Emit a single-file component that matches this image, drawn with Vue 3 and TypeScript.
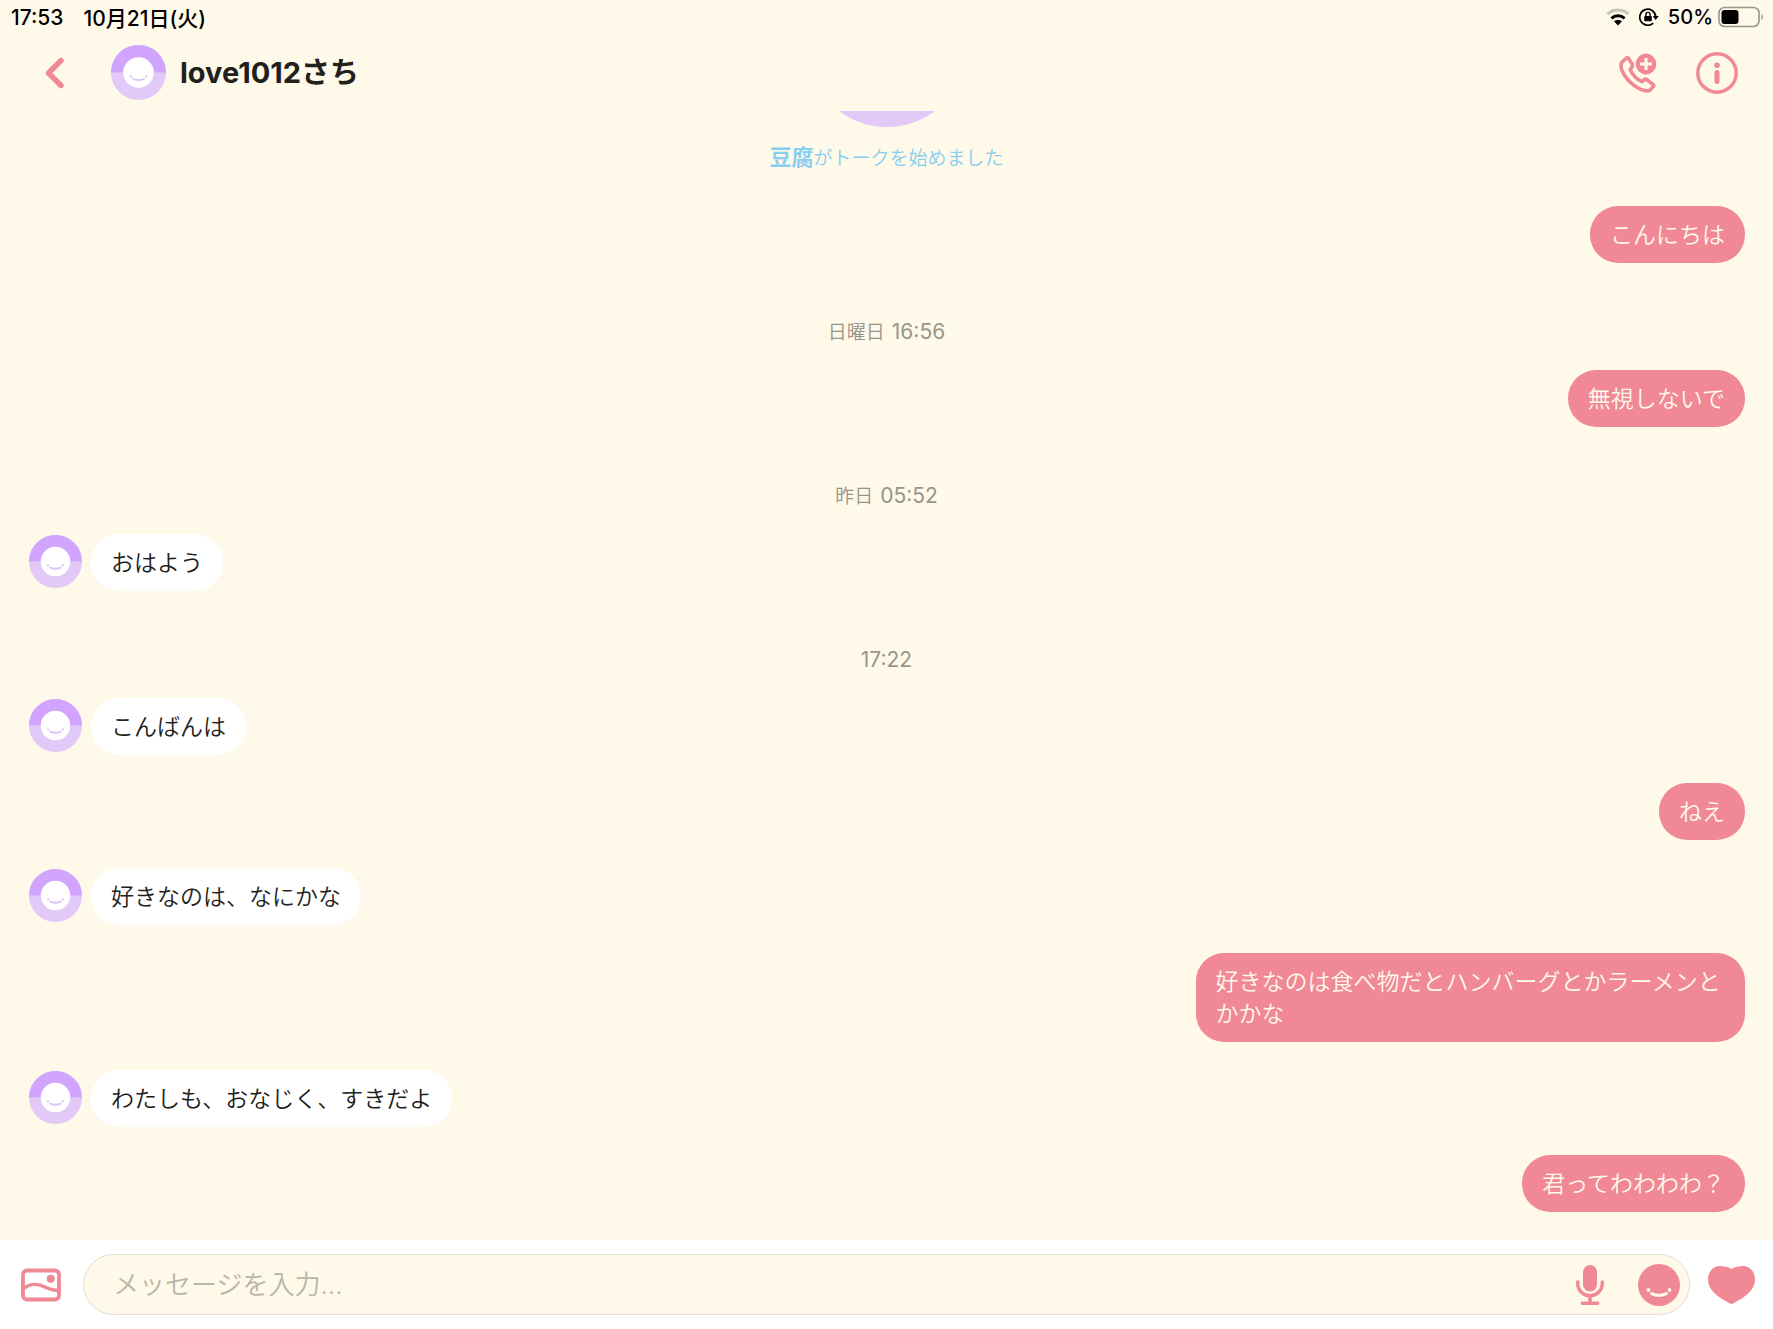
<script setup lang="ts">
import { defineComponent, h, ref } from 'vue'

type Entry =
  | { kind: 'date'; day?: string; time: string }
  | { kind: 'sent'; text: string }
  | { kind: 'received'; text: string }

const entries: Entry[] = [
  { kind: 'sent', text: 'こんにちは' },
  { kind: 'date', day: '日曜日', time: '16:56' },
  { kind: 'sent', text: '無視しないで' },
  { kind: 'date', day: '昨日', time: '05:52' },
  { kind: 'received', text: 'おはよう' },
  { kind: 'date', time: '17:22' },
  { kind: 'received', text: 'こんばんは' },
  { kind: 'sent', text: 'ねえ' },
  { kind: 'received', text: '好きなのは、なにかな' },
  { kind: 'sent', text: '好きなのは食べ物だとハンバーグとかラーメンとかかな' },
  { kind: 'received', text: 'わたしも、おなじく、すきだよ' },
  { kind: 'sent', text: '君ってわわわわ？' },
]

const draft = ref('')

// Two-tone purple disc with a small smiling face
const Avatar = defineComponent({
  name: 'Avatar',
  setup: () => () =>
    h('svg', { viewBox: '0 0 56 56', 'aria-hidden': 'true' }, [
      h('circle', { cx: 28, cy: 28, r: 28, fill: '#e2c9f7' }),
      h('path', { d: 'M0 28a28 28 0 0 1 56 0z', fill: '#d1a5ff' }),
      h('circle', { cx: 28, cy: 28, r: 15.6, fill: '#fff' }),
      h('path', {
        d: 'M22.5 34.4Q28 37 33.5 34.4',
        fill: 'none',
        stroke: '#dcc6f8',
        'stroke-width': 2,
        'stroke-linecap': 'round',
      }),
      h('circle', { cx: 20.2, cy: 32, r: 1.2, fill: '#dcc6f8' }),
      h('circle', { cx: 35.8, cy: 32, r: 1.2, fill: '#dcc6f8' }),
    ]),
})
</script>

<template>
  <div class="app">
    <div class="status">
      <div class="status-group">
        <span>17:53</span>
        <span>10月21日(火)</span>
      </div>
      <div class="status-group status-right">
        <svg class="glyph" width="24" height="18" viewBox="0 0 24 18" aria-hidden="true">
          <path d="M1.500 6.200a15.500 15.500 0 0 1 21 0" fill="none" stroke="#c9c4b8" stroke-width="3" />
          <path d="M5.400 10.300a9.800 9.800 0 0 1 13.200 0" fill="none" stroke="#000" stroke-width="3" />
          <path d="M12 17.500l-4-4.200a6 6 0 0 1 8 0z" fill="#000" />
        </svg>
        <svg class="glyph" width="20" height="18" viewBox="0 0 20 18" aria-hidden="true">
          <path d="M14.200 15.100A8 8 0 1 1 16.700 8.300" fill="none" stroke="#000" stroke-width="1.700" />
          <path d="M13.600 8h6.200l-3.100 4z" fill="#000" />
          <rect x="5.200" y="7.900" width="7.600" height="5.400" rx="1" fill="#000" />
          <path d="M6.900 8.300V6.500a2.100 2.100 0 0 1 4.200 0v1.800" fill="none" stroke="#000" stroke-width="1.400" />
        </svg>
        <span>50%</span>
        <svg width="47" height="22" viewBox="0 0 47 22" aria-hidden="true">
          <rect x="1" y="1.500" width="40" height="19" rx="5.500" fill="none" stroke="#98958a" stroke-width="1.600" />
          <rect x="3.500" y="4" width="17" height="14" rx="3" fill="#000" />
          <path d="M43.500 7.500q3 3.500 0 7z" fill="#98958a" />
        </svg>
      </div>
    </div>

    <header class="header">
      <button class="icon-btn back" type="button" aria-label="戻る">
        <svg width="22" height="32" viewBox="0 0 22 32">
          <path d="M17 3.500L4.500 16L17 28.500" fill="none" stroke="currentColor" stroke-width="5.400" stroke-linecap="round" stroke-linejoin="round" />
        </svg>
      </button>
      <Avatar class="header-avatar" />
      <h1 class="title">love1012さち</h1>
      <button class="icon-btn" type="button" aria-label="通話">
        <svg width="40" height="42" viewBox="0 0 40 42">
          <path d="M8.600 6L4.500 9.600C1.200 13 3.800 21.500 10.500 28.600C17.500 36 26 40.200 31.500 38.500L35.500 34.500Q36.200 33.500 35.200 32.700L28.500 27.400Q27.500 26.700 26.600 27.500L23.900 29.700Q20.500 28.300 17.200 25Q13.500 21 12.200 17.500L14.500 14.300Q15 13.300 14.400 12.400L10.400 6.200Q9.500 5.200 8.600 6Z" fill="none" stroke="currentColor" stroke-width="3.600" stroke-linejoin="round" />
          <circle cx="28" cy="12" r="11.800" fill="#fff9ea" />
          <circle cx="28" cy="12" r="10.400" fill="currentColor" />
          <path d="M28 6v12M22 12h12" stroke="#fff9ea" stroke-width="3.200" />
        </svg>
      </button>
      <button class="icon-btn info" type="button" aria-label="情報">
        <svg width="42" height="42" viewBox="0 0 42 42">
          <circle cx="21" cy="21" r="19.200" fill="none" stroke="currentColor" stroke-width="3.400" />
          <circle cx="21" cy="13.200" r="2.800" fill="currentColor" />
          <path d="M21 20.500v9" stroke="currentColor" stroke-width="5" stroke-linecap="round" />
        </svg>
      </button>
    </header>

    <main class="talk">
      <div class="intro">
        <Avatar class="intro-avatar" />
        <p class="intro-text"><strong>豆腐</strong>がトークを始めました</p>
      </div>
      <template v-for="(entry, i) in entries" :key="i">
        <p v-if="entry.kind === 'date'" class="date">
          <span v-if="entry.day" class="day">{{ entry.day }}</span>
          <time>{{ entry.time }}</time>
        </p>
        <div v-else class="row" :class="entry.kind">
          <Avatar v-if="entry.kind === 'received'" class="row-avatar" />
          <p class="bubble">{{ entry.text }}</p>
        </div>
      </template>
    </main>

    <footer class="composer">
      <button class="icon-btn picture" type="button" aria-label="画像">
        <svg width="40" height="34" viewBox="0 0 40 34">
          <rect x="2" y="2.500" width="36" height="29" rx="4" fill="none" stroke="currentColor" stroke-width="3.800" />
          <path d="M2 21C10 14.500 17 15.500 25 19.500Q32 23 38 22.300" fill="none" stroke="currentColor" stroke-width="3.600" />
          <circle cx="29.700" cy="10.800" r="4" fill="currentColor" />
        </svg>
      </button>
      <div class="field">
        <input v-model="draft" class="field-input" type="text" placeholder="メッセージを入力..." aria-label="メッセージを入力" />
        <button class="icon-btn" type="button" aria-label="音声">
          <svg width="28" height="42" viewBox="0 0 28 42">
            <rect x="7" y="1" width="14" height="26.500" rx="7" fill="currentColor" />
            <path d="M1.700 18v1.500a12.300 12.300 0 0 0 24.600 0V18M14 32v6M6.300 39.300h15.400" fill="none" stroke="currentColor" stroke-width="3.400" stroke-linecap="round" />
          </svg>
        </button>
        <button class="icon-btn" type="button" aria-label="スタンプ">
          <svg width="42" height="42" viewBox="0 0 42 42">
            <circle cx="21" cy="21" r="21" fill="currentColor" />
            <path d="M13.700 29.600Q21 33 28.300 29.600" fill="none" stroke="#fff9ea" stroke-width="3.200" stroke-linecap="round" />
            <circle cx="10.500" cy="26" r="1.900" fill="#fff9ea" />
            <circle cx="31.500" cy="26" r="1.900" fill="#fff9ea" />
          </svg>
        </button>
      </div>
      <button class="icon-btn" type="button" aria-label="ハート">
        <svg width="47" height="40" viewBox="0 0 47 40">
          <path d="M23.500 4C27 1.800 31 1 35 1C42 1 47 7 47 14.500C47 25 38 31.500 25.500 38.300Q23.500 39.500 21.500 38.300C9 31.500 0 25 0 14.500C0 7 5 1 12 1C16 1 20 1.800 23.500 4Z" fill="currentColor" />
        </svg>
      </button>
    </footer>
  </div>
</template>

<style>
body {
  margin: 0;
  background: #fff9ea;
}
</style>

<style scoped>
.app {
  display: flex;
  flex-direction: column;
  height: 100vh;
  background: #fff9ea;
  color: #21201a;
  font-family: Inter, "Noto Sans CJK JP", sans-serif;
}

p,
h1 {
  margin: 0;
}

svg {
  display: block;
  flex: none;
}

.icon-btn {
  flex: none;
  padding: 0;
  border: 0;
  background: none;
  color: #f08896;
  cursor: pointer;
}

.status {
  display: flex;
  flex: none;
  align-items: center;
  justify-content: space-between;
  height: 34px;
  padding: 0 8px 0 11px;
  color: #000;
  font-size: 21px;
  font-weight: 500;
}

.status-group {
  display: flex;
  align-items: center;
  gap: 20px;
}

.status-right {
  gap: 5px;
  font-size: 20px;
}

.glyph {
  margin-right: 4px;
}

.header {
  display: flex;
  flex: none;
  align-items: center;
  height: 77px;
  padding: 0 35px 0 44px;
}

.back {
  margin-right: 45px;
}

.header-avatar {
  width: 55px;
  height: 55px;
}

.title {
  flex: 1;
  margin-left: 14px;
  font-size: 29px;
  font-weight: 700;
  line-height: 40px;
}

.info {
  margin-left: 38px;
}

.talk {
  display: flex;
  flex: 1;
  flex-direction: column;
  justify-content: flex-end;
  gap: 28px;
  min-height: 0;
  padding: 0 28px 28px;
  overflow: hidden;
}

.intro {
  display: flex;
  flex: none;
  flex-direction: column;
  align-items: center;
  gap: 17px;
  padding-bottom: 6px;
}

.intro-avatar {
  width: 160px;
  height: 160px;
}

.intro-text {
  color: #87ceef;
  font-size: 19px;
  font-weight: 350;
  line-height: 26px;
}

.intro-text strong {
  font-size: 22px;
  font-weight: 700;
}

.date {
  display: flex;
  flex: none;
  align-items: baseline;
  justify-content: center;
  gap: 7px;
  padding-top: 30px;
  color: #97948a;
  font-size: 21px;
  font-weight: 400;
  line-height: 21px;
}

.day {
  font-size: 19px;
  font-weight: 350;
  line-height: 16px;
}

.row {
  display: flex;
  flex: none;
  align-items: flex-start;
  gap: 9px;
}

.received {
  padding-left: 1px;
}

.sent {
  justify-content: flex-end;
}

.row-avatar {
  width: 53px;
  height: 53px;
  margin-top: 1px;
}

.bubble {
  box-sizing: border-box;
  max-width: 32%;
  padding: 13px 20px 12px;
  border-radius: 28px;
  background: #fff;
  font-size: 23px;
  font-weight: 350;
  line-height: 32px;
}

.sent .bubble {
  background: #f08896;
  color: #fff9ea;
}

.composer {
  display: flex;
  flex: none;
  align-items: center;
  gap: 18px;
  padding: 14px 18px 14px 21px;
  background: #fff;
}

.picture {
  margin-right: 4px;
}

.field {
  display: flex;
  flex: 1;
  align-items: center;
  gap: 34px;
  box-sizing: border-box;
  height: 61px;
  padding: 0 9px 0 29px;
  border: 1px solid #e2dfd0;
  border-radius: 31px;
  background: #fff9ea;
}

.field-input {
  flex: 1;
  min-width: 0;
  padding: 0;
  border: 0;
  outline: 0;
  background: none;
  color: #21201a;
  font-family: inherit;
  font-size: 26px;
  font-weight: 350;
}

.field-input::placeholder {
  color: #b9b6a6;
  opacity: 1;
}
</style>
